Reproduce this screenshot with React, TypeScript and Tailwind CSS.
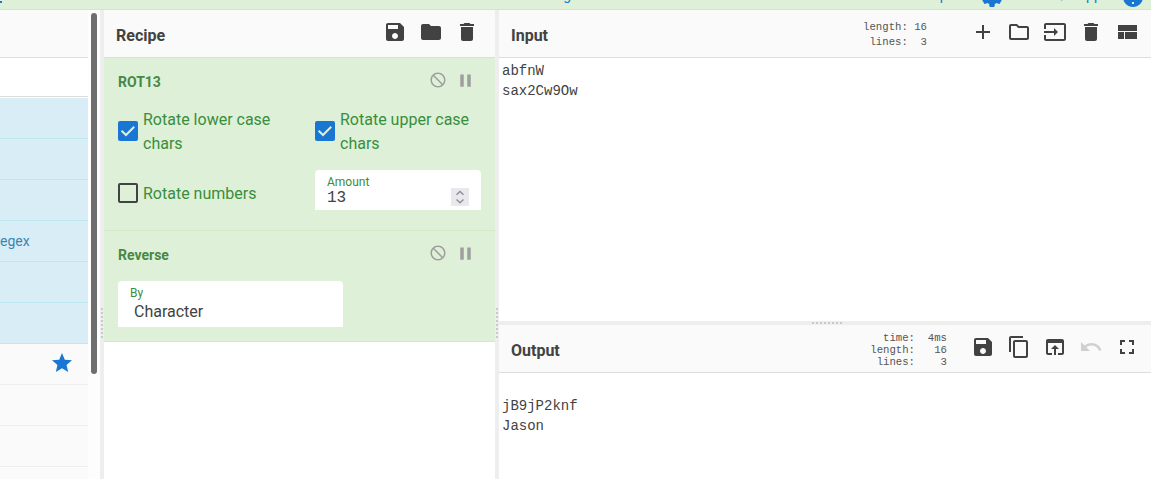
import type { ReactNode } from "react";

const PATHS = {
  save: "M17 3H5c-1.11 0-2 .9-2 2v14c0 1.1.89 2 2 2h14c1.1 0 2-.9 2-2V7l-4-4zm-5 16c-1.66 0-3-1.34-3-3s1.34-3 3-3 3 1.34 3 3-1.34 3-3 3zm3-10H5V5h10v4z",
  folder: "M10 4H4c-1.1 0-1.99.9-1.99 2L2 18c0 1.1.9 2 2 2h16c1.1 0 2-.9 2-2V8c0-1.1-.9-2-2-2h-8l-2-2z",
  trash: "M6 19c0 1.1.9 2 2 2h8c1.1 0 2-.9 2-2V7H6v12zM19 4h-3.5l-1-1h-5l-1 1H5v2h14V4z",
  add: "M19 13h-6v6h-2v-6H5v-2h6V5h2v6h6v2z",
  folderOpen: "M9.17 6l2 2H20v10H4V6h5.17M10 4H4c-1.1 0-1.99.9-1.99 2L2 18c0 1.1.9 2 2 2h16c1.1 0 2-.9 2-2V8c0-1.1-.9-2-2-2h-8l-2-2z",
  input: "M21 3.01H3c-1.1 0-2 .9-2 2V9h2V4.99h18v14.03H3V15H1v4.01c0 1.1.9 1.98 2 1.98h18c1.1 0 2-.88 2-1.98v-14c0-1.11-.9-2-2-2zM11 16l4-4-4-4v3H1v2h10v3z",
  quilt: "M10 19h12v-7H10v7zm-7 0h6v-7H3v7zM3 5v6h19V5H3z",
  copy: "M16 1H4c-1.1 0-2 .9-2 2v14h2V3h12V1zm3 4H8c-1.1 0-2 .9-2 2v14c0 1.1.9 2 2 2h11c1.1 0 2-.9 2-2V7c0-1.1-.9-2-2-2zm0 16H8V7h11v14z",
  openIn: "M19 4H5c-1.11 0-2 .9-2 2v12c0 1.1.89 2 2 2h4v-2H5V8h14v10h-4v2h4c1.1 0 2-.9 2-2V6c0-1.1-.89-2-2-2zm-7 6l-4 4h3v6h2v-6h3l-4-4z",
  undo: "M12.5 8c-2.65 0-5.05.99-6.9 2.6L2 7v9h9l-3.62-3.62c1.39-1.16 3.16-1.88 5.12-1.88 3.54 0 6.55 2.31 7.6 5.5l2.37-.78C21.08 11.03 17.15 8 12.5 8z",
  fullscreen: "M7 14H5v5h5v-2H7v-3zm-2-4h2V7h3V5H5v5zm12 7h-3v2h5v-5h-2v3zM14 5v2h3v3h2V5h-5z",
  block: "M12 2C6.48 2 2 6.48 2 12s4.48 10 10 10 10-4.48 10-10S17.52 2 12 2zM4 12c0-4.42 3.58-8 8-8 1.85 0 3.55.63 4.9 1.69L5.69 16.9C4.63 15.55 4 13.85 4 12zm8 8c-1.85 0-3.55-.63-4.9-1.69L18.31 7.1C19.37 8.45 20 10.15 20 12c0 4.42-3.58 8-8 8z",
  pause: "M6 19h4V5H6v14zm8-14v14h4V5h-4z",
  star: "M12 17.27L18.18 21l-1.64-7.03L22 9.24l-7.19-.61L12 2 9.19 8.63 2 9.24l5.46 4.73L5.82 21z",
  gear: "M19.43 12.98c.04-.32.07-.64.07-.98s-.03-.66-.07-.98l2.11-1.65c.19-.15.24-.42.12-.64l-2-3.46c-.12-.22-.39-.3-.61-.22l-2.49 1c-.52-.4-1.08-.73-1.69-.98l-.38-2.65C14.46 2.18 14.25 2 14 2h-4c-.25 0-.46.18-.49.42l-.38 2.65c-.61.25-1.17.59-1.69.98l-2.49-1c-.23-.09-.49 0-.61.22l-2 3.46c-.13.22-.07.49.12.64l2.11 1.65c-.04.32-.07.65-.07.98s.03.66.07.98l-2.11 1.65c-.19.15-.24.42-.12.64l2 3.46c.12.22.39.3.61.22l2.49-1c.52.4 1.08.73 1.69.98l.38 2.65c.03.24.24.42.49.42h4c.25 0 .46-.18.49-.42l.38-2.65c.61-.25 1.17-.59 1.69-.98l2.49 1c.23.09.49 0 .61-.22l2-3.46c.12-.22.07-.49-.12-.64l-2.11-1.65z",
  help: "M12 2C6.48 2 2 6.48 2 12s4.48 10 10 10 10-4.48 10-10S17.52 2 12 2zm1 17h-2v-2h2v2z",
};

function Icon({ name, className = "size-6" }: { name: keyof typeof PATHS; className?: string }) {
  return (
    <svg viewBox="0 0 24 24" fill="currentColor" className={`shrink-0 ${className}`}>
      <path d={PATHS[name]} />
    </svg>
  );
}

function Dots({ vertical = false }: { vertical?: boolean }) {
  return (
    <div className={vertical ? "flex flex-col gap-[2px]" : "flex gap-[2px]"}>
      {Array.from({ length: 8 }, (_, i) => (
        <span key={i} className="size-[2px] bg-[#c9c9cc]" />
      ))}
    </div>
  );
}

function VerticalGutter() {
  return (
    <div className="flex w-1 shrink-0 justify-center bg-[#eee] pt-[298px]">
      <Dots vertical />
    </div>
  );
}

function Banner() {
  return (
    <header className="flex h-[10px] shrink-0 items-end overflow-hidden border-b border-[#ddd] bg-[#dff0d8] text-[14px] text-[#1976d2]">
      <div className="flex h-[30px] w-full shrink-0 items-center leading-[30px]">
        <span className="mt-[5px] h-[19px] w-[2px] shrink-0 self-start border-b-2 border-[#1976d2]" />
        <span className="w-[586px] shrink-0 pt-px pr-[9px] text-right whitespace-nowrap">Last build: 2 months ago</span>
        <span className="ml-[342px] w-[50px] shrink-0 pt-px">Options</span>
        <Icon name="gear" className="mt-[5px] size-6" />
        <span className="ml-[16px] w-[101px] shrink-0 pt-px whitespace-nowrap">About / Support</span>
        <Icon name="help" className="mt-[5px] size-6" />
      </div>
    </header>
  );
}

function TitleBar({ title, children }: { title: string; children: ReactNode }) {
  return (
    <div className="flex h-12 shrink-0 border-b border-[#ddd] bg-[#fafafa] pl-3">
      <h2 className="pt-[14px] text-[16px] leading-6 font-bold">{title}</h2>
      {children}
    </div>
  );
}

function OperationList() {
  return (
    <aside className="flex w-[100px] shrink-0 bg-[#fdfdfd]">
      <div className="w-[88px] overflow-hidden">
        <div className="h-12 border-b border-[#ddd] bg-[#fafafa]" />
        <div className="mb-px h-[39px] border-b border-[#ddd] bg-white" />
        {["", "", "", "egex", "", ""].map((text, i) => (
          <div
            key={i}
            className="h-[41px] border-b border-[#bce8f1] bg-[#d9edf7] text-[14px] leading-[41px] text-[#3a87ad]"
          >
            {text}
          </div>
        ))}
        {[true, false, false, false].map((starred, i) => (
          <div key={i} className="flex h-[41px] border-b border-[#eee] bg-[#fafafa] pt-[7px] pl-[50px]">
            {starred && <Icon name="star" className="size-6 text-[#1976d2]" />}
          </div>
        ))}
      </div>
      <div className="mt-[3px] ml-[3px] h-[361px] w-[6px] rounded-[3px] bg-[#6e6e6e]" />
    </aside>
  );
}

function OpHeader({ name }: { name: string }) {
  return (
    <div className="flex h-[21px]">
      <h3 className="flex-1 text-[14px] leading-[21px] font-bold text-[#468847]">{name}</h3>
      <div className="-mt-[2px] flex gap-2 text-[#9e9e9e]">
        <Icon name="block" className="mt-[1px] size-[18px] -scale-x-100" />
        <Icon name="pause" className="-mr-[1px] size-[21px]" />
      </div>
    </div>
  );
}

function CheckOption({ label, checked = false }: { label: string; checked?: boolean }) {
  return (
    <label className="flex items-center gap-[5px] text-[16px] leading-6 text-[#388e3c]">
      <span
        className={
          checked
            ? "flex size-5 shrink-0 items-center justify-center rounded-[2px] bg-[#1976d2]"
            : "size-5 shrink-0 rounded-[2px] border-2 border-[#424242]"
        }
      >
        {checked && (
          <svg viewBox="0 0 20 20" className="size-5 fill-none stroke-[#dff0d8]" strokeWidth="2">
            <path d="M3.6 9.7 8 14l8.2-8.2" />
          </svg>
        )}
      </span>
      <span className="pt-[2px] -mb-[0px]">{label}</span>
    </label>
  );
}

function Recipe() {
  return (
    <section className="flex w-[391px] shrink-0 flex-col bg-white">
      <TitleBar title="Recipe">
        <div className="ml-auto flex gap-3 pt-[10px] pr-4">
          <Icon name="save" />
          <Icon name="folder" />
          <Icon name="trash" />
        </div>
      </TitleBar>
      <div className="h-[173px] border-b border-[#d6e9c6] bg-[#dff0d8] pt-[14px] pl-[14px]">
        <div className="pr-5">
          <OpHeader name="ROT13" />
        </div>
        <div className="mt-[13px] grid grid-cols-[197px_160px]">
          <div className="w-[165px]"><CheckOption label="Rotate lower case chars" checked /></div>
          <CheckOption label="Rotate upper case chars" checked />
        </div>
        <div className="mt-[14px] flex">
          <div className="w-[197px] shrink-0 pt-[10px]"><CheckOption label="Rotate numbers" /></div>
          <div className="h-10 w-[166px] shrink-0 rounded-t-[4px] bg-white pt-[5px] pr-3 pl-3">
            <div className="text-[12px] leading-[14px] text-[#388e3c]">Amount</div>
            <div className="flex justify-between">
              <span className="font-['Liberation_Mono',monospace] text-[16px] leading-[18px]">13</span>
              <span className="-mt-px flex h-[18px] w-[18px] items-center justify-center bg-[#e9e9ed]">
                <svg viewBox="0 0 18 18" className="size-[18px] fill-none stroke-[#8f8f9d]" strokeWidth="1.5">
                  <path d="m5.5 6.7 3.5-3.2 3.5 3.2m-7 4.8L9 14.7l3.5-3.2" />
                </svg>
              </span>
            </div>
          </div>
        </div>
      </div>
      <div className="h-[111px] border-b border-[#d6e9c6] bg-[#dff0d8] pt-[14px] pl-[14px]">
        <div className="pr-5">
          <OpHeader name="Reverse" />
        </div>
        <div className="mt-[15px] h-[46px] w-[225px] rounded-t-[4px] bg-white pt-[5px] pl-3">
          <div className="text-[12px] leading-[14px] text-[#388e3c]">By</div>
          <div className="pl-1 text-[16px] leading-6">Character</div>
        </div>
      </div>
    </section>
  );
}

function DataText({ children }: { children: string }) {
  return (
    <pre className="pl-[3px] font-['Liberation_Mono',monospace] text-[14px] leading-5">{children}</pre>
  );
}

function Stats({ children, className }: { children: string; className: string }) {
  return (
    <pre className={`ml-auto font-['Liberation_Mono',monospace] text-[10.67px] text-[#555] ${className}`}>{children}</pre>
  );
}

export default function App() {
  return (
    <div className="flex h-[479px] w-[1151px] flex-col overflow-hidden bg-white font-[Roboto,sans-serif] text-[#424242]">
      <Banner />
      <div className="flex min-h-0 flex-1">
        <OperationList />
        <VerticalGutter />
        <Recipe />
        <VerticalGutter />
        <main className="flex min-w-0 flex-1 flex-col">
          <section className="flex h-[311px] shrink-0 flex-col">
            <TitleBar title="Input">
              <Stats className="pt-[10px] leading-[15px]">{"length: 16\n lines:  3"}</Stats>
              <div className="ml-[44px] flex gap-3 pt-[10px] pr-3">
                <Icon name="add" />
                <Icon name="folderOpen" />
                <Icon name="input" />
                <Icon name="trash" />
                <Icon name="quilt" />
              </div>
            </TitleBar>
            <div className="pt-[3px]">
              <DataText>{"abfnW\nsax2Cw9Ow"}</DataText>
            </div>
          </section>
          <div className="flex h-1 shrink-0 items-center justify-center bg-[#eee] pl-[3px]">
            <Dots />
          </div>
          <section className="flex flex-1 flex-col">
            <TitleBar title="Output">
              <Stats className="pt-[7px] leading-3">{"  time:  4ms\nlength:   16\n lines:    3"}</Stats>
              <div className="ml-[24px] flex gap-3 pt-[10px] pr-3">
                <Icon name="save" />
                <Icon name="copy" />
                <Icon name="openIn" />
                <Icon name="undo" className="size-6 text-[#d0d0d0]" />
                <Icon name="fullscreen" />
              </div>
            </TitleBar>
            <div className="pt-[23px]">
              <DataText>{"jB9jP2knf\nJason"}</DataText>
            </div>
          </section>
        </main>
      </div>
    </div>
  );
}
